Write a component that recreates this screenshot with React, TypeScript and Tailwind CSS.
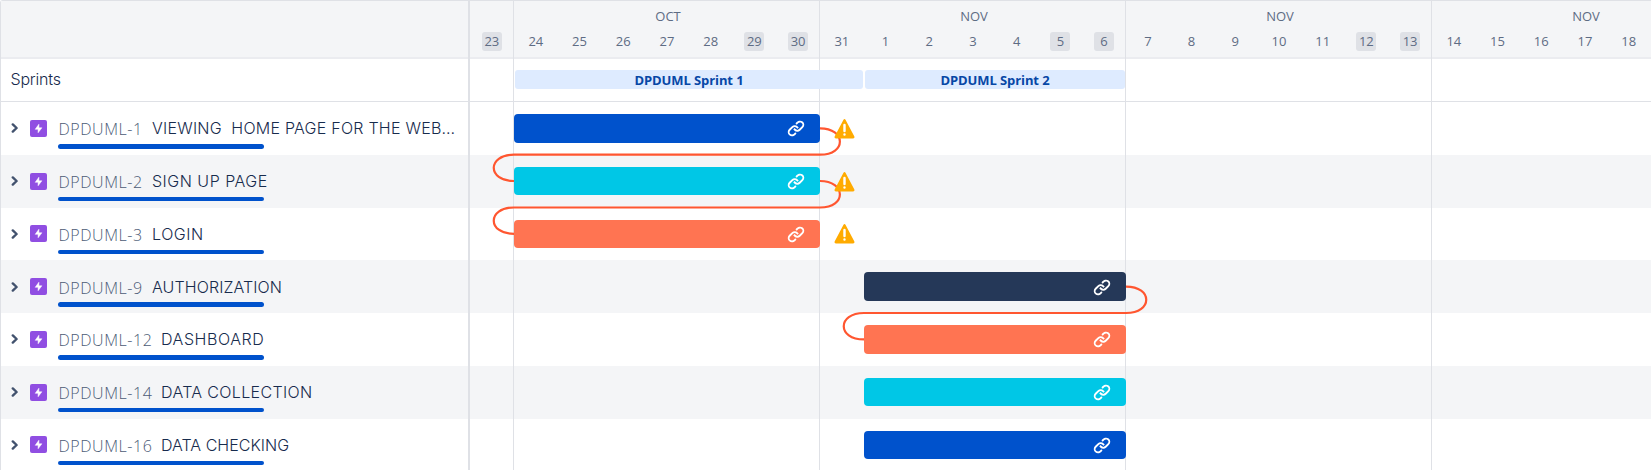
import React from "react";

type Epic = {
  id: string;
  title: string;
  titleClass: string;
  keyGap: string;
  bar: string;
  warn?: boolean;
};

const OCT = "ml-[44px] w-[306px]";
const NOV = "ml-[394px] w-[262px]";

const epics: Epic[] = [
  { id: "DPDUML-1", title: "VIEWING\u00a0 HOME PAGE FOR THE WEB…", titleClass: "tracking-[0.24px]", keyGap: "w-[93px]", bar: `${OCT} bg-[#0052cc]`, warn: true },
  { id: "DPDUML-2", title: "SIGN UP PAGE", titleClass: "tracking-[0.5px]", keyGap: "w-[93px]", bar: `${OCT} bg-[#00c7e6]`, warn: true },
  { id: "DPDUML-3", title: "LOGIN", titleClass: "tracking-[0.55px]", keyGap: "w-[93px]", bar: `${OCT} bg-[#ff7452]`, warn: true },
  { id: "DPDUML-9", title: "AUTHORIZATION", titleClass: "tracking-[0.1px]", keyGap: "w-[93px]", bar: `${NOV} bg-[#253858]` },
  { id: "DPDUML-12", title: "DASHBOARD", titleClass: "tracking-[0.55px]", keyGap: "w-[102px]", bar: `${NOV} bg-[#ff7452]` },
  { id: "DPDUML-14", title: "DATA COLLECTION", titleClass: "tracking-[0.35px]", keyGap: "w-[102px]", bar: `${NOV} bg-[#00c7e6]` },
  { id: "DPDUML-16", title: "DATA CHECKING", titleClass: "tracking-[0.03px]", keyGap: "w-[102px]", bar: `${NOV} bg-[#0052cc]` },
];

const weeks = [
  { month: "OCT", days: [24, 25, 26, 27, 28, 29, 30] },
  { month: "NOV", days: [31, 1, 2, 3, 4, 5, 6] },
  { month: "NOV", days: [7, 8, 9, 10, 11, 12, 13] },
  { month: "NOV", days: [14, 15, 16, 17, 18] },
];

function LinkIcon() {
  return (
    <svg viewBox="0 0 24 24" className="size-[22px]" fill="#fff">
      <path d="M12.856 5.457l-.937.92a1.002 1.002 0 000 1.437 1.047 1.047 0 001.463 0l.984-.966c.967-.95 2.542-1.135 3.602-.288a2.54 2.54 0 01.203 3.81l-2.903 2.852a2.646 2.646 0 01-3.696 0l-1.11-1.09L9 13.57l1.108 1.089c1.822 1.788 4.802 1.788 6.622 0l2.905-2.852a4.558 4.558 0 00-.357-6.82c-1.893-1.517-4.695-1.226-6.422.47" />
      <path d="M11.144 19.543l.937-.92a1.002 1.002 0 000-1.437 1.047 1.047 0 00-1.462 0l-.985.966c-.967.95-2.542 1.135-3.602.288a2.54 2.54 0 01-.203-3.81l2.903-2.852a2.646 2.646 0 013.696 0l1.11 1.09L15 11.43l-1.108-1.089c-1.822-1.788-4.802-1.788-6.622 0l-2.905 2.852a4.558 4.558 0 00.357 6.82c1.893 1.517 4.695 1.226 6.422-.47" />
    </svg>
  );
}

function WarningIcon() {
  return (
    <svg viewBox="0 0 24 24" className="ml-[10px] size-[29px] shrink-0">
      <path fill="#ffab00" d="M12.938 4.967c-.518-.978-1.36-.974-1.876 0L3.938 18.425c-.518.978-.045 1.771 1.057 1.771h14.01c1.102 0 1.573-.797 1.057-1.771L12.938 4.967z" />
      <path fill="#fff" d="M12 15a1 1 0 01-1-1V9a1 1 0 012 0v5a1 1 0 01-1 1m0 3a1 1 0 010-2 1 1 0 010 2" />
    </svg>
  );
}

function Day({ n, weekend }: { n: number; weekend?: boolean }) {
  return (
    <div className="flex w-[43.71px] justify-center">
      <span className={weekend ? "h-[19px] w-[20px] rounded-[3px] bg-[#dfe1e6] text-center" : "h-[19px] w-[20px] text-center"}>{n}</span>
    </div>
  );
}

function EpicRow({ epic, striped }: { epic: Epic; striped: boolean }) {
  return (
    <div className={striped ? "h-[52.75px] bg-[#f4f5f7]" : "h-[52.75px]"}>
      <div className="flex h-[42px] items-center pt-[10.5px] pl-[9px]">
        <svg viewBox="0 0 8 12" className="h-[12px] w-[8px]" fill="none" stroke="#42526e" strokeWidth="2.4" strokeLinecap="round" strokeLinejoin="round">
          <path d="M2.8 2.4 6.6 6 2.8 9.6" />
        </svg>
        <svg viewBox="0 0 17 17" className="ml-[12px] size-[17px]">
          <rect width="17" height="17" rx="2" fill="#904ee2" />
          <path d="M8.9 4.2v3.6h3L8.1 12.8V9.3H5.2z" fill="#fff" stroke="#fff" strokeWidth=".5" strokeLinejoin="round" />
        </svg>
        <span className={`ml-[11.5px] mt-[2px] mr-[0.5px] shrink-0 font-['Open_Sans'] text-[16px] font-light leading-5 tracking-[0.55px] text-[#4c5b76] ${epic.keyGap}`}>{epic.id}</span>
        <span className={`whitespace-nowrap font-[Inter] text-[16px] font-light leading-5 text-[#172b4d] ${epic.titleClass}`}>{epic.title}</span>
      </div>
      <div className="ml-[57px] h-[4.5px] w-[206px] rounded-full bg-[#0052cc]" />
    </div>
  );
}

export default function App() {
  return (
    <div className="flex h-[470px] w-full overflow-hidden bg-white font-['Open_Sans',sans-serif]">
      <aside className="w-[468px] shrink-0 rounded-tl-[3px] border-t border-l border-[#dfe1e6]">
        <div className="h-[58px] border-b-2 border-[#ebecf0] bg-[#f4f5f7]" />
        <div className="flex h-[43px] items-center border-b border-[#dfe1e6] pb-[2px] pl-[9.5px] font-[Inter] text-[16px] font-light tracking-[-0.2px] text-[#172b4d]">Sprints</div>
        {epics.map((e, i) => (
          <EpicRow key={e.id} epic={e} striped={i % 2 === 1} />
        ))}
      </aside>
      <div className="w-[2px] shrink-0 bg-[#dfe1e6]" />
      <main className="relative min-w-0 flex-1 overflow-hidden border-t border-[#dfe1e6]">
        <div className="flex h-[58px] w-full border-b-2 border-[#ebecf0] bg-[#f4f5f7] text-[13px] leading-[19px] text-[#5e6c84]">
          <div className="w-[44px] shrink-0 pt-[31px]">
            <Day n={23} weekend />
          </div>
          {weeks.map((w, i) => (
            <div key={i} className="w-[306px] shrink-0">
              <div className="pt-[6px] pl-[2px] text-center">{w.month}</div>
              <div className="flex pt-[6px]">
                {w.days.map((d, j) => (
                  <Day key={d} n={d} weekend={j > 4} />
                ))}
              </div>
            </div>
          ))}
        </div>
        <div className="pointer-events-none absolute inset-0 flex pl-[43px]">
          {weeks.map((_, i) => (
            <div key={i} className="w-[306px] shrink-0 border-l border-[#dfe1e6]" />
          ))}
        </div>
        <div className="relative flex h-[43px] items-start border-b border-[#dfe1e6] pt-[11px] text-center text-[13px] font-bold leading-[20px] tracking-[-0.1px] text-[#0747a6]">
          <div className="ml-[45px] h-[19px] w-[348px] rounded-[3px] bg-[#deebff]">DPDUML Sprint 1</div>
          <div className="ml-[2px] h-[19px] w-[260px] rounded-[3px] bg-[#deebff]">DPDUML Sprint 2</div>
        </div>
        {epics.map((e, i) => (
          <div key={e.id} className={i % 2 ? "h-[52.75px] bg-[#f4f5f7]" : "h-[52.75px]"}>
            <div className="relative z-20 flex h-[52.75px] items-center">
              <div className={`flex h-[28.5px] shrink-0 items-center justify-end rounded-[4px] pr-[13px] ${e.bar}`}>
                <LinkIcon />
              </div>
              {e.warn && <WarningIcon />}
            </div>
          </div>
        ))}
        <div className="pointer-events-none absolute inset-x-0 top-[101px] bottom-0 z-10 flex pl-[43px]">
          {weeks.map((_, i) => (
            <div key={i} className="w-[306px] shrink-0 border-l border-[#dfe1e6]" />
          ))}
        </div>
        <svg className="pointer-events-none absolute -top-px left-0 z-10 h-[470px] w-[1181px]" viewBox="470 0 1181 470" fill="none" stroke="#ff5630" strokeWidth="2.2">
          <path d="M820 128.3C846 128.3 847 154.7 820 154.7H514C487 154.7 487 181 514 181" />
          <path d="M820 181C846 181 847 207.5 820 207.5H514C487 207.5 487 233.8 514 233.8" />
          <path d="M1126 286.6C1153 286.6 1153 313 1126 313H864C837 313 837 339.4 864 339.4" />
        </svg>
      </main>
    </div>
  );
}
